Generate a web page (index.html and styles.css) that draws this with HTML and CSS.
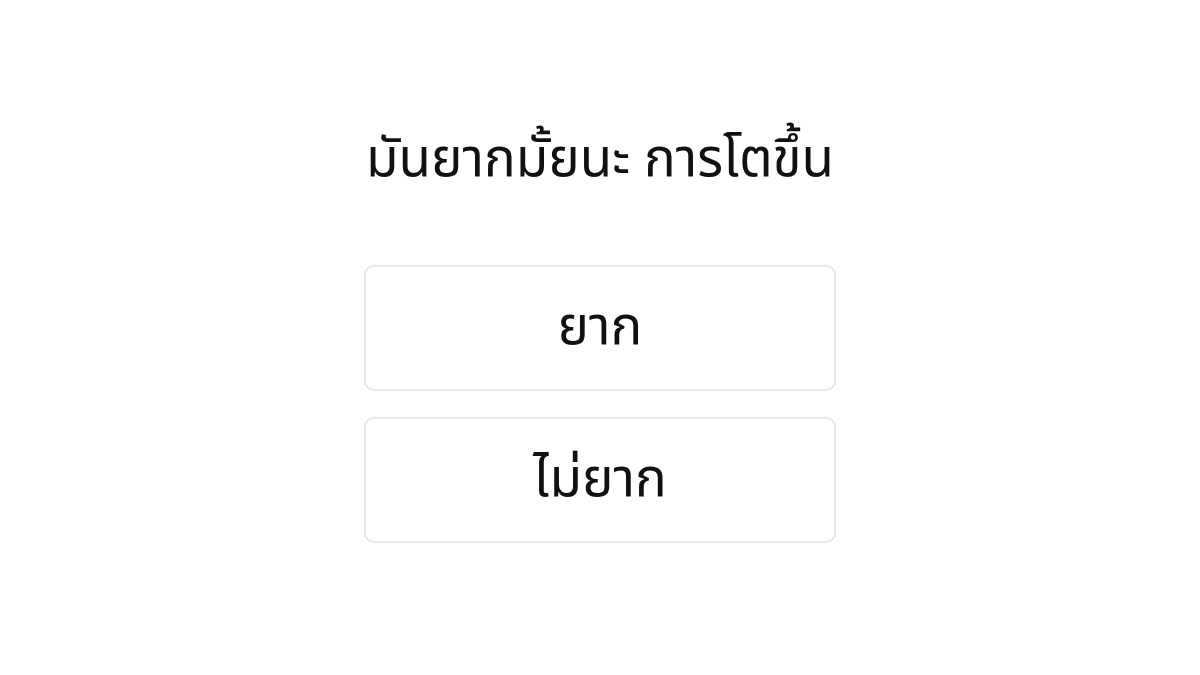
FILE: index.html
```html
<!DOCTYPE html>
<html lang="th">
<head>
    <meta charset="UTF-8">
    <meta name="viewport" content="width=device-width, initial-scale=1.0">
    <title>Quiz</title>
    <link rel="stylesheet" href="styles.css">
</head>
<body>
    <div class="quiz">
        <div class="question">มันยากมั้ยนะ การโตขึ้น</div>
        <div class="choices">
            <button class="choice">ยาก</button>
            <button class="choice">ไม่ยาก</button>
        </div>
    </div>
</body>
</html>
```

FILE: styles.css
```css
* {
    margin: 0;
    padding: 0;
    box-sizing: border-box;
}

body {
    font-family: 'Noto Sans Thai', 'Noto Sans', sans-serif;
    background-color: #fff;
    color: #111;
}

.quiz {
    width: 472px;
    margin: 0 auto;
    padding-top: 125px;
    display: flex;
    flex-direction: column;
    align-items: center;
}

.question {
    font-size: 53px;
    line-height: 70px;
    text-align: center;
}

.choices {
    width: 100%;
    margin-top: 70px;
    display: flex;
    flex-direction: column;
    gap: 26px;
}

.choice {
    height: 126px;
    width: 100%;
    background-color: #fff;
    border: 2.5px solid #e3e7ee;
    border-radius: 10px;
    font-family: inherit;
    font-size: 53px;
    color: #111;
    cursor: pointer;
}
```
